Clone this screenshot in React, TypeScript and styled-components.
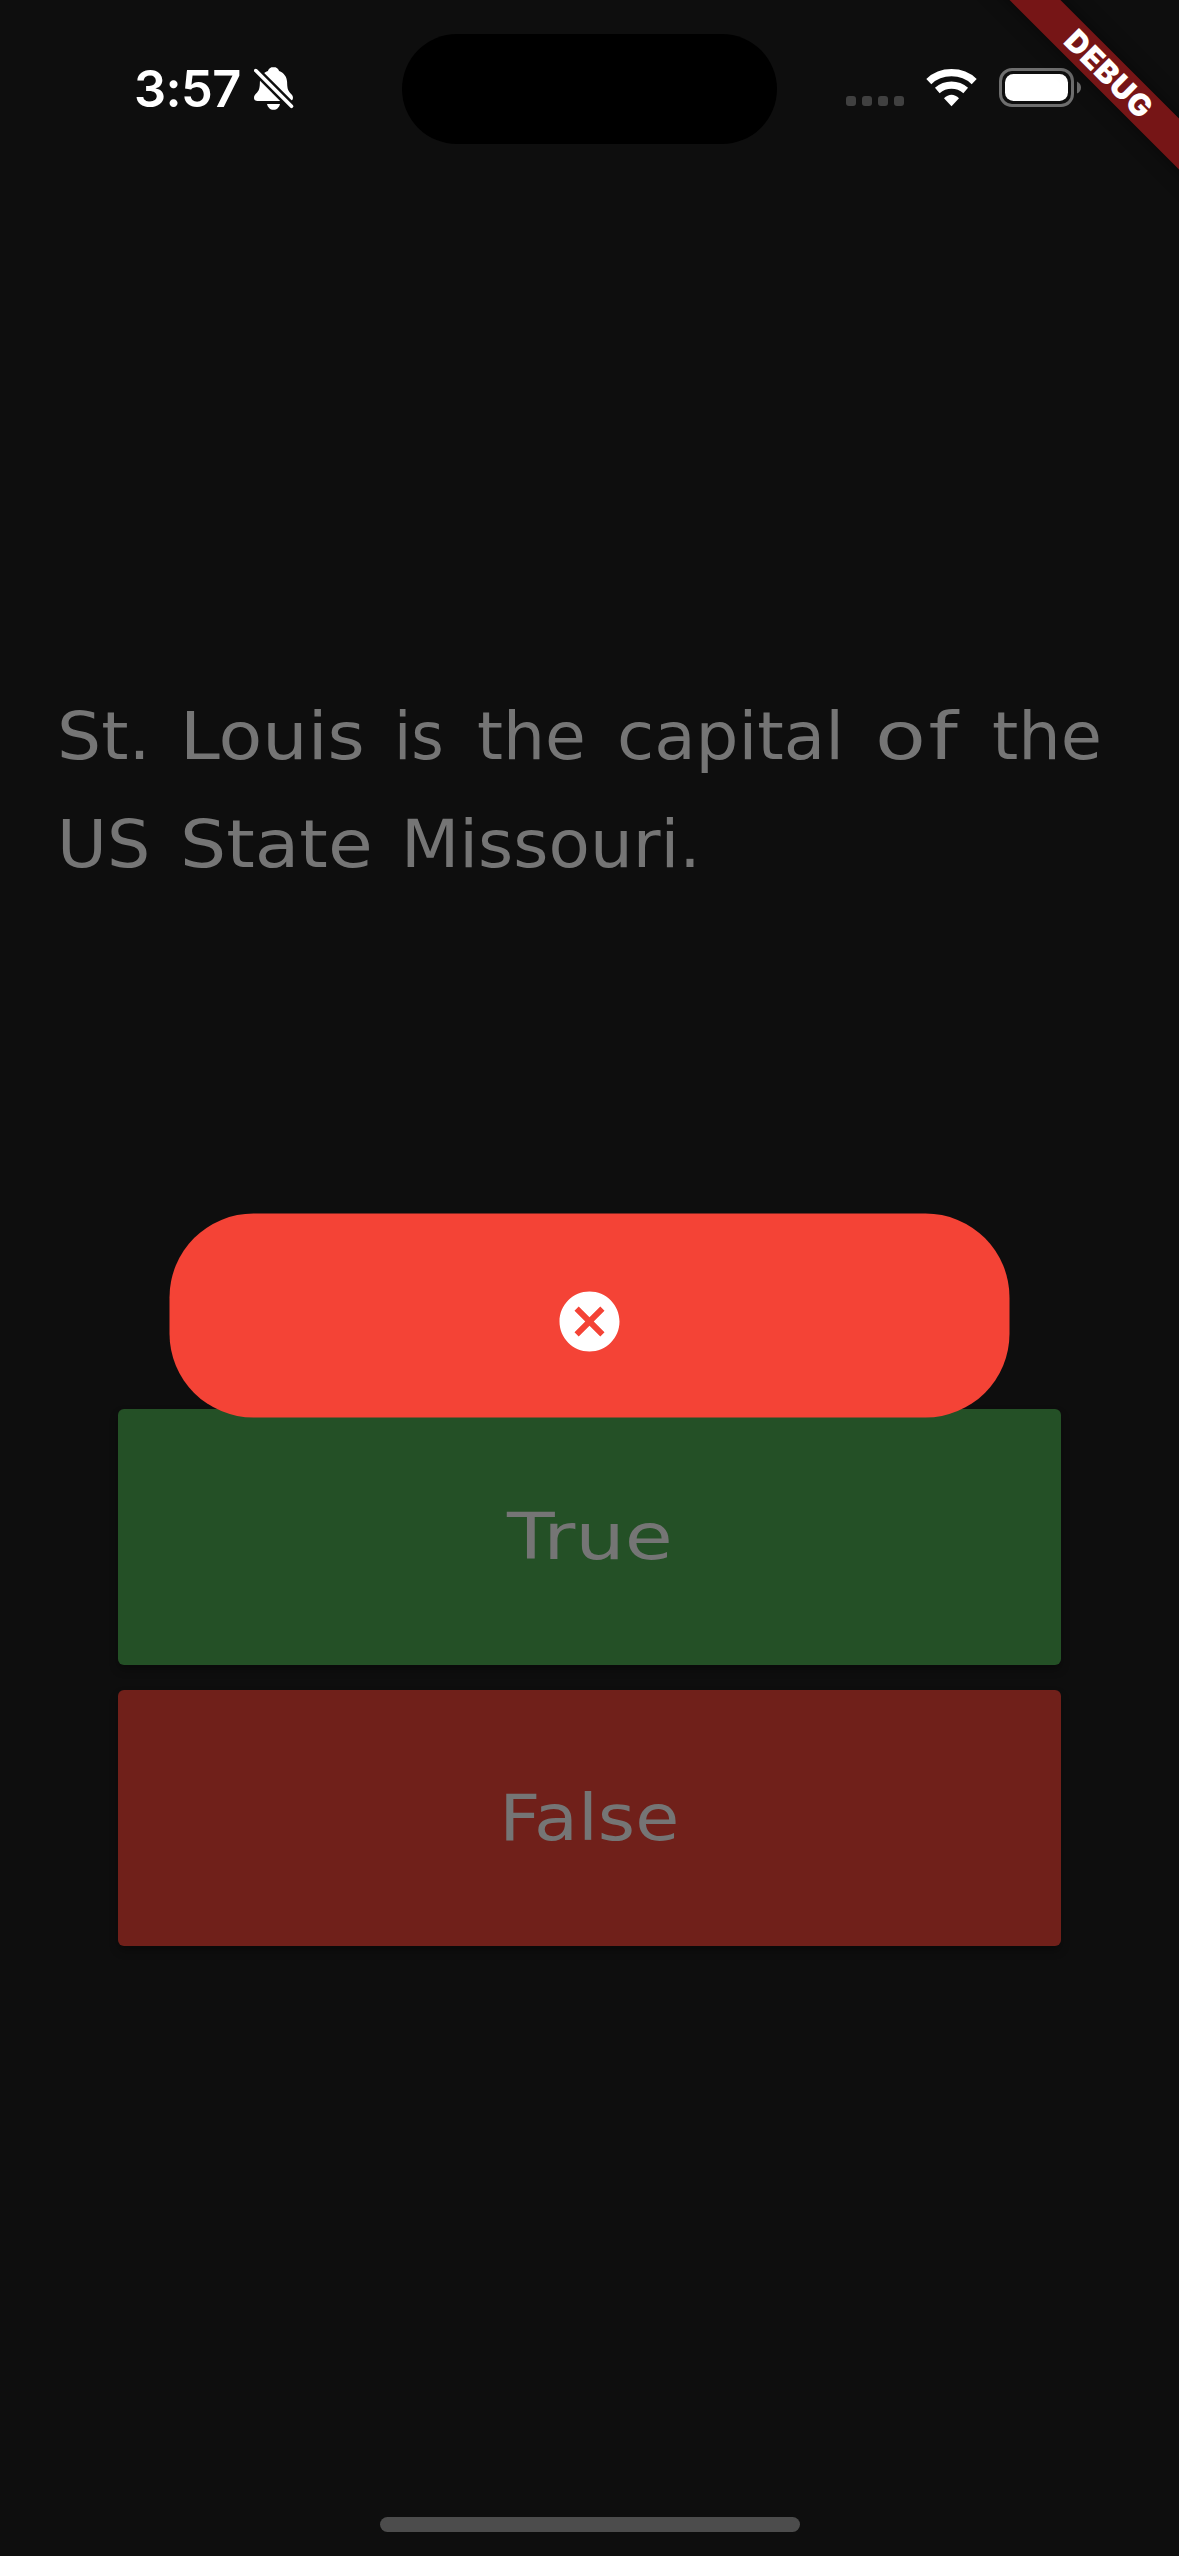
import React from "react";
import styled, { createGlobalStyle } from "styled-components";

const GlobalStyle = createGlobalStyle`
  html, body { margin: 0; padding: 0; background: #0e0e0e; }
  * { box-sizing: border-box; }
`;

const Screen = styled.main`
  position: relative;
  width: 1179px;
  height: 2556px;
  overflow: hidden;
  display: flex;
  flex-direction: column;
  background: #0e0e0e;
  font-family: "DejaVu Sans", sans-serif;
`;

const StatusBar = styled.header`
  display: flex;
  align-items: flex-start;
  height: 177px;
  padding: 34px 90px 0 134px;
`;

const Clock = styled.div`
  flex: none;
  width: 120px;
  height: 110px;
  padding-top: 24px;
  font: 600 50.5px/61px Inter, sans-serif;
  letter-spacing: -0.6px;
  color: #fff;
  white-space: nowrap;
`;

const BellSlot = styled.div`
  flex: none;
  width: 148px;
  padding-top: 32px;
  svg { display: block; }
`;

const Island = styled.div`
  flex: none;
  width: 375px;
  height: 110px;
  border-radius: 55px;
  background: #000;
`;

const Indicators = styled.div`
  flex: none;
  display: flex;
  padding: 34px 0 0 69px;
  svg { display: block; }
`;

const SignalDots = styled.div`
  display: flex;
  gap: 6px;
  padding-top: 28px;
  width: 80px;
`;

const Dot = styled.i`
  width: 10px;
  height: 10px;
  border-radius: 3px;
  background: #404040;
`;

const Ribbon = styled.div`
  position: absolute;
  left: 958px;
  top: 55px;
  width: 300px;
  height: 36px;
  padding-left: 3px;
  transform: rotate(45deg);
  background: #761516;
  box-shadow: 0 0 18px rgba(0, 0, 0, 0.5);
  display: flex;
  align-items: center;
  justify-content: center;
  font: 900 30.5px/36px Inter, sans-serif;
  letter-spacing: 0.9px;
  color: #fff;
`;

const Question = styled.h1`
  margin: 0;
  padding: 506px 0 0 57px;
  height: 1232px;
  font-weight: 400;
  font-size: 65px;
  line-height: 108px;
  color: #757575;
`;

const Line = styled.span`
  display: flex;
  white-space: pre;
`;

const Word = styled.span<{ $width: number; $stretch?: number; $spacing?: number }>`
  flex: none;
  width: ${(p) => p.$width}px;
  letter-spacing: ${(p) => p.$spacing ?? 0}px;
  transform: scaleX(${(p) => p.$stretch ?? 1});
  transform-origin: left center;
`;

const Answers = styled.section`
  display: flex;
  flex-direction: column;
  gap: 25px;
  padding: 0 118px;
`;

const Answer = styled.button<{ $color: string }>`
  width: 943px;
  height: 256px;
  border: 0;
  border-radius: 6px;
  padding: 0;
  background: ${(p) => p.$color};
  box-shadow: 0 5px 9px rgba(0, 0, 0, 0.3);
  color: #757575;
  font: 400 64px/1 "DejaVu Sans", sans-serif;
`;

const AnswerLabel = styled.span<{ $stretch: number }>`
  display: inline-block;
  transform: scaleX(${(p) => p.$stretch});
`;

const ResultDialog = styled.div`
  position: absolute;
  left: 169px;
  top: 1213px;
  width: 840px;
  height: 204px;
  transform: translate(0.5px, 0.5px);
  border-radius: 84px;
  background: #f44336;
  display: flex;
  align-items: center;
  justify-content: center;
  padding-top: 12px;
`;

const HomeIndicator = styled.div`
  width: 420px;
  height: 15px;
  border-radius: 8px;
  background: #4c4c4c;
  margin: auto auto 24px 380px;
`;

const BellSlash = () => (
  <svg width="40" height="45" viewBox="0 0 40 45">
    <g fill="#fff">
      <path d="M19.500 1c-3 0-5 1.700-5.600 4-5 2-7.900 6-8 11-.1 6-.7 8-2.800 10.500C1.300 28.500 0 29.500 0 31.700 0 34 1.500 35 3.500 35h32c2 0 3.500-1 3.500-3.300 0-2.200-1.500-3.200-3-5-2.200-2.500-2.800-4.700-2.900-10.700-.1-5-3-9-8-11-.6-2.300-2.600-4-5.600-4z" />
      <path d="M13 38h13c-.8 3.500-3.200 5.800-6.500 5.800S13.800 41.500 13 38z" />
    </g>
    <path d="M-2 0.800L44 46.800" stroke="#0e0e0e" strokeWidth="8.500" />
    <path d="M1.800 4.600L37.500 40.300" stroke="#fff" strokeWidth="3.600" strokeLinecap="round" />
  </svg>
);

const Wifi = () => (
  <svg width="73" height="40" viewBox="0 0 73 40">
    <g fill="none" stroke="#fff" strokeWidth="7.200">
      <path d="M2.800 13.600Q12 4.700 25.500 4.700T48.200 13.600" />
      <path d="M11.300 22.500Q17.500 17.200 25.500 17.200T39.700 22.500" />
    </g>
    <path d="M25.500 38.200L18 30.300C22.500 25.400 28.500 25.400 33 30.300z" fill="#fff" />
  </svg>
);

const Battery = () => (
  <svg width="84" height="40" viewBox="0 0 84 40">
    <rect x="1.500" y="1.500" width="72" height="36" rx="11.500" fill="none" stroke="#6e6e6e" strokeWidth="3" />
    <rect x="6" y="6" width="63" height="27" rx="8.500" fill="#fff" />
    <path d="M78 13.500Q82 15.500 82 19.500T78 25.500z" fill="#6e6e6e" />
  </svg>
);

const Cancel = () => (
  <svg width="72" height="72" viewBox="0 0 24 24" fill="#fff">
    <path d="M12 2C6.470 2 2 6.470 2 12s4.470 10 10 10 10-4.470 10-10S17.530 2 12 2zm5 13.590L15.590 17 12 13.410 8.410 17 7 15.590 10.590 12 7 8.410 8.410 7 12 10.590 15.590 7 17 8.410 13.410 12 17 15.590z" />
  </svg>
);

export default function App() {
  return (
    <>
      <GlobalStyle />
      <Screen>
        <StatusBar>
          <Clock>3:57</Clock>
          <BellSlot><BellSlash /></BellSlot>
          <Island />
          <Indicators>
            <SignalDots><Dot /><Dot /><Dot /><Dot /></SignalDots>
            <Wifi />
            <Battery />
          </Indicators>
        </StatusBar>
        <Question>
          <Line>
            <Word $width={123} $stretch={1.07}>St.</Word>
            <Word $width={214} $stretch={1.1}>Louis</Word>
            <Word $width={83} $stretch={0.96}>is</Word>
            <Word $width={140} $stretch={1.02}>the</Word>
            <Word $width={258} $stretch={1.04}>capital</Word>
            <Word $width={117} $stretch={1.28} $spacing={2}>of</Word>
            <Word $width={120} $stretch={1.03}>the</Word>
          </Line>
          <Line>
            <Word $width={123} $stretch={1.05}>US</Word>
            <Word $width={221} $stretch={1.12}>State</Word>
            <Word $width={320} $stretch={1.04}>Missouri.</Word>
          </Line>
        </Question>
        <Answers>
          <Answer $color="#245026"><AnswerLabel $stretch={1.22}>True</AnswerLabel></Answer>
          <Answer $color="#70201a"><AnswerLabel $stretch={1.12}>False</AnswerLabel></Answer>
        </Answers>
        <HomeIndicator />
        <ResultDialog><Cancel /></ResultDialog>
        <Ribbon>DEBUG</Ribbon>
      </Screen>
    </>
  );
}
